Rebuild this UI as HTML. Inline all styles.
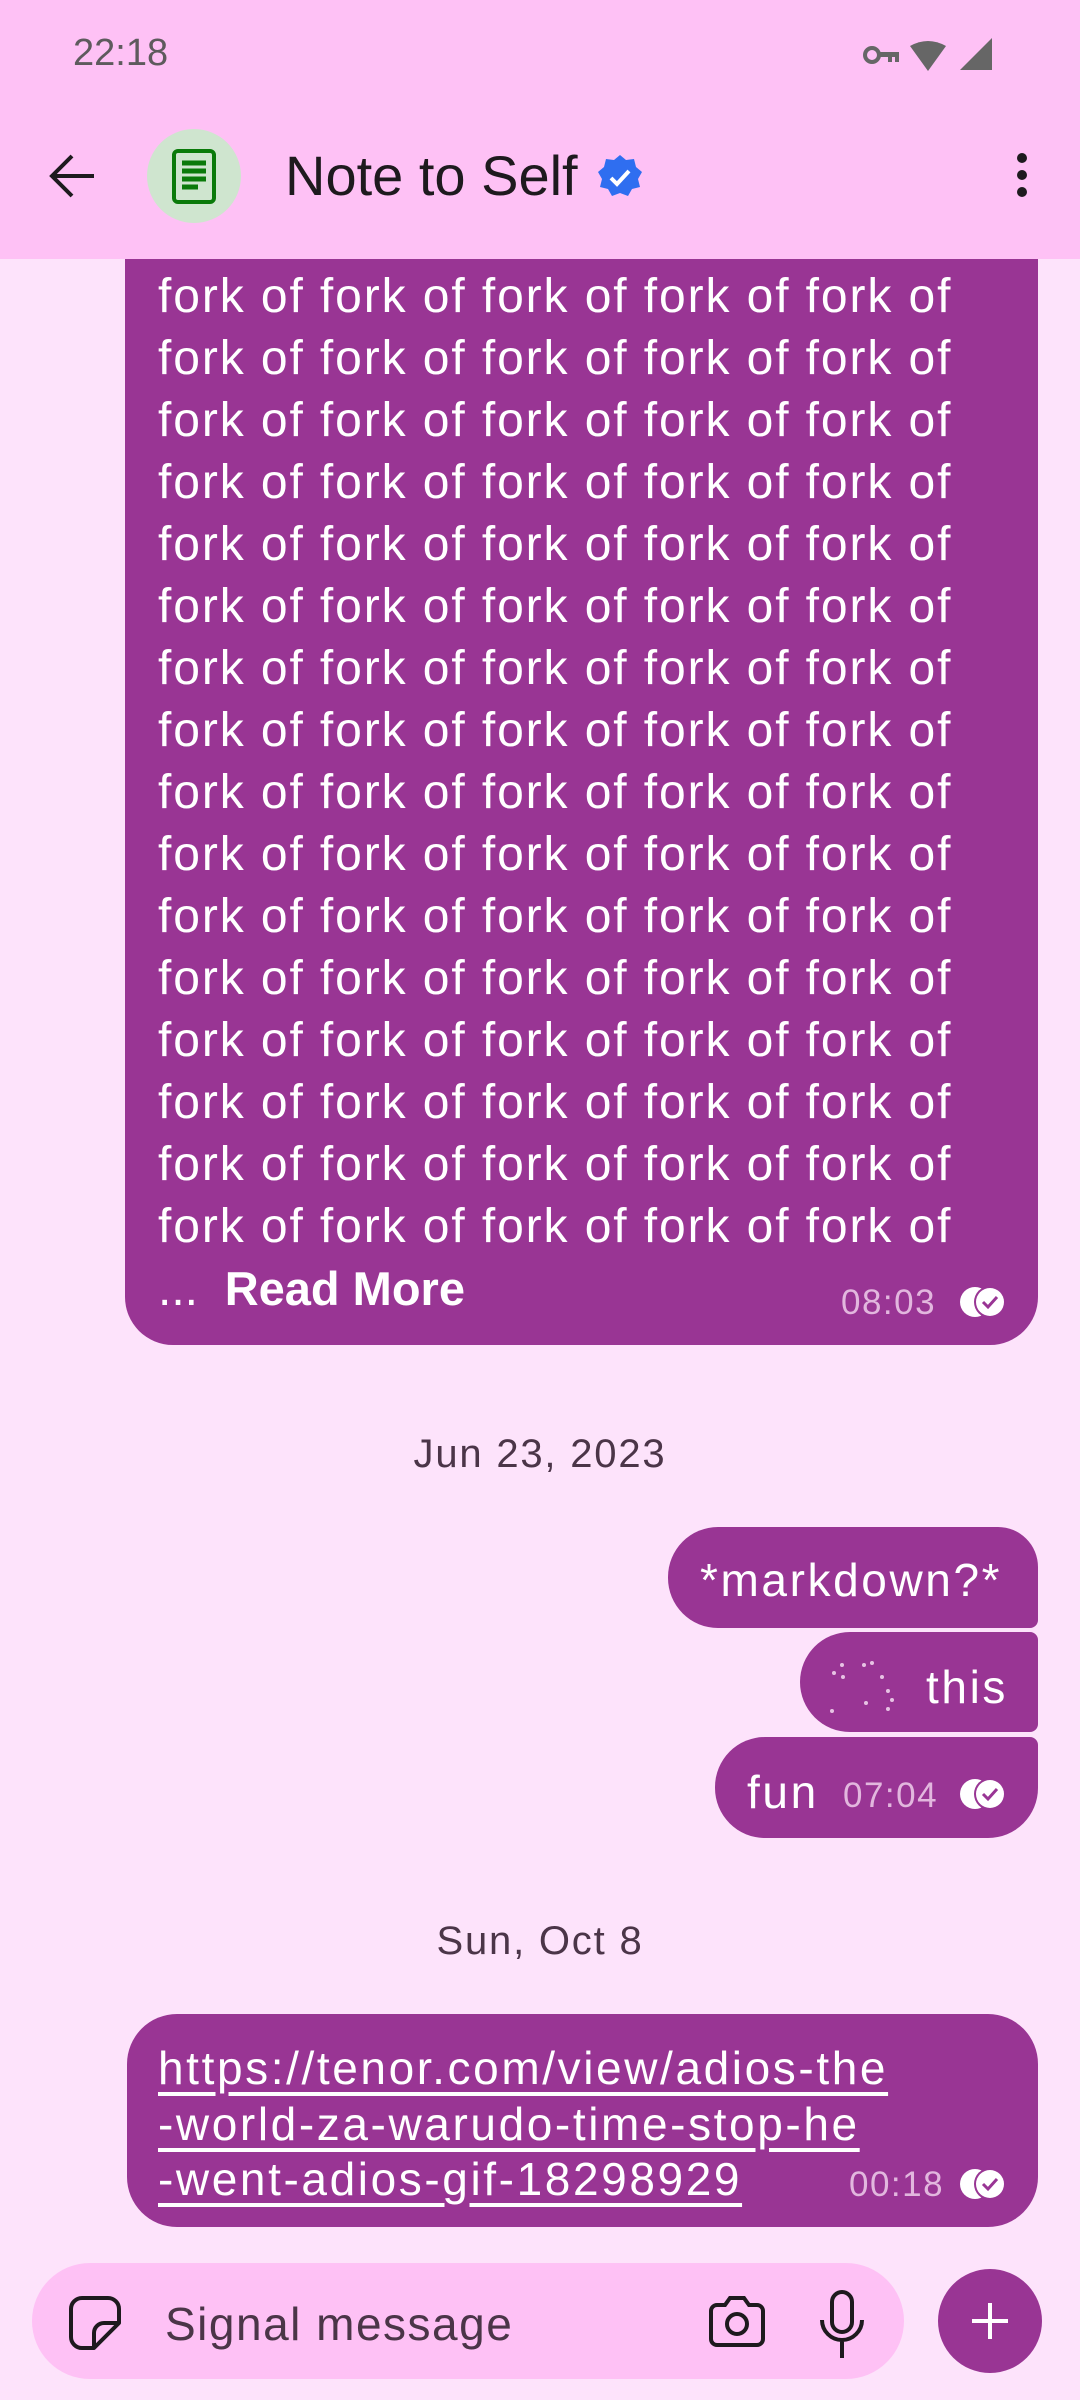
<!DOCTYPE html>
<html><head><meta charset="utf-8"><style>
*{margin:0;padding:0;box-sizing:border-box}
body{width:1080px;height:2400px;background:#fde3fb;position:relative;overflow:hidden;font-family:"Liberation Sans",sans-serif;color:#fff}
.abs{position:absolute}
.hdr{position:absolute;left:0;top:0;width:1080px;height:259px;background:#fec1f5;z-index:5}
.bub{position:absolute;background:#993594}
.fl{position:absolute;left:158px;font-size:48px;letter-spacing:1.9px;line-height:62px;white-space:nowrap}
.ts{position:absolute;font-size:35px;letter-spacing:1.5px;color:#e2b7de;white-space:nowrap}
.t46{position:absolute;font-size:46px;letter-spacing:2.6px;white-space:nowrap}
</style></head><body>
<div class="hdr">
  <div class="abs" style="left:73px;top:32px;font-size:38px;color:#5e5a5d">22:18</div>
  <svg class="abs" style="left:862px;top:38px" width="132" height="34" viewBox="0 0 132 34">
    <circle cx="10" cy="17" r="7" fill="none" stroke="#666" stroke-width="4"/>
    <path d="M17 14h20v10h-4v-5h-3v5h-4v-5h-9z" fill="#666"/>
    <path d="M48 8 Q66 -2 84 8 L66 33 Z" fill="#666"/>
    <path d="M130 0 L130 32 L98 32 Z" fill="#666"/>
  </svg>
  <svg class="abs" style="left:48px;top:153px" width="48" height="46" viewBox="0 0 48 46"><path d="M46 23H4M24 3L4 23l20 20" fill="none" stroke="#1e1a1e" stroke-width="4"/></svg>
  <div class="abs" style="left:147px;top:129px;width:94px;height:94px;border-radius:50%;background:#cfe5cf"></div>
  <svg class="abs" style="left:172px;top:149px" width="44" height="55" viewBox="0 0 44 55">
    <rect x="2" y="2" width="40" height="51" rx="4" fill="none" stroke="#0a7a0a" stroke-width="4"/>
    <path d="M10 14h24M10 22h24M10 30h24M10 38h16" stroke="#0a7a0a" stroke-width="5"/>
  </svg>
  <div class="abs" style="left:285px;top:143px;font-size:56px;color:#1e1a1e">Note to Self</div>
  <svg class="abs" style="left:596px;top:153px" width="48" height="48" viewBox="0 0 48 48">
    <path d="M24 2l6 5 8-1 2 8 6 5-4 7 2 8-8 2-4 7-8-3-8 3-4-7-8-2 2-8-4-7 6-5 2-8 8 1z" fill="#2f6ef0"/>
    <path d="M15 25l6 6 12-13" fill="none" stroke="#fff" stroke-width="4"/>
  </svg>
  <div class="abs" style="left:1017px;top:153px;width:10px;height:10px;border-radius:50%;background:#1e1a1e"></div>
  <div class="abs" style="left:1017px;top:170px;width:10px;height:10px;border-radius:50%;background:#1e1a1e"></div>
  <div class="abs" style="left:1017px;top:187px;width:10px;height:10px;border-radius:50%;background:#1e1a1e"></div>
</div>

<div class="bub" style="left:125px;top:180px;width:913px;height:1165px;border-radius:0 0 48px 48px"></div>
<div class="fl" style="top:266px">fork of fork of fork of fork of fork of</div>
<div class="fl" style="top:328px">fork of fork of fork of fork of fork of</div>
<div class="fl" style="top:390px">fork of fork of fork of fork of fork of</div>
<div class="fl" style="top:452px">fork of fork of fork of fork of fork of</div>
<div class="fl" style="top:514px">fork of fork of fork of fork of fork of</div>
<div class="fl" style="top:576px">fork of fork of fork of fork of fork of</div>
<div class="fl" style="top:638px">fork of fork of fork of fork of fork of</div>
<div class="fl" style="top:700px">fork of fork of fork of fork of fork of</div>
<div class="fl" style="top:762px">fork of fork of fork of fork of fork of</div>
<div class="fl" style="top:824px">fork of fork of fork of fork of fork of</div>
<div class="fl" style="top:886px">fork of fork of fork of fork of fork of</div>
<div class="fl" style="top:948px">fork of fork of fork of fork of fork of</div>
<div class="fl" style="top:1010px">fork of fork of fork of fork of fork of</div>
<div class="fl" style="top:1072px">fork of fork of fork of fork of fork of</div>
<div class="fl" style="top:1134px">fork of fork of fork of fork of fork of</div>
<div class="fl" style="top:1196px">fork of fork of fork of fork of fork of</div>
<div class="fl" style="top:1258px;letter-spacing:0">...&nbsp;&nbsp;<b style="font-size:47px;letter-spacing:0">Read More</b></div>
<div class="ts" style="left:841px;top:1283px">08:03</div>
<svg class="abs" style="left:958px;top:1284px" width="50" height="36" viewBox="0 0 50 36"><circle cx="17" cy="18" r="15" fill="#fff"/><circle cx="32" cy="18" r="16" fill="#993594"/><circle cx="32" cy="18" r="14" fill="#fff"/><path d="M25 18l5 5 9-10" fill="none" stroke="#993594" stroke-width="3"/></svg>

<div class="abs" style="left:0;width:1080px;top:1432px;text-align:center;font-size:40px;letter-spacing:1.8px;color:#4b3548">Jun 23, 2023</div>

<div class="bub" style="left:668px;top:1527px;width:370px;height:101px;border-radius:50px 40px 8px 50px"></div>
<div class="t46" style="left:700px;top:1553px">*markdown?*</div>
<div class="bub" style="left:800px;top:1632px;width:238px;height:100px;border-radius:50px 8px 8px 50px"></div>
<div class="t46" style="left:926px;top:1660px">this</div>
<svg class="abs" style="left:830px;top:1655px" width="80" height="60"><g fill="#e7c3e4"><circle cx="4" cy="18" r="2"/><circle cx="12" cy="10" r="2"/><circle cx="13" cy="22" r="2"/><circle cx="34" cy="10" r="2"/><circle cx="42" cy="8" r="2"/><circle cx="52" cy="22" r="2"/><circle cx="58" cy="36" r="2"/><circle cx="62" cy="45" r="2"/><circle cx="36" cy="48" r="2"/><circle cx="58" cy="54" r="2"/><circle cx="2" cy="56" r="2"/></g></svg>
<div class="bub" style="left:715px;top:1737px;width:323px;height:101px;border-radius:50px 8px 50px 50px"></div>
<div class="t46" style="left:747px;top:1765px">fun</div>
<div class="ts" style="left:843px;top:1776px">07:04</div>
<svg class="abs" style="left:958px;top:1776px" width="50" height="36" viewBox="0 0 50 36"><circle cx="17" cy="18" r="15" fill="#fff"/><circle cx="32" cy="18" r="16" fill="#993594"/><circle cx="32" cy="18" r="14" fill="#fff"/><path d="M25 18l5 5 9-10" fill="none" stroke="#993594" stroke-width="3"/></svg>

<div class="abs" style="left:0;width:1080px;top:1919px;text-align:center;font-size:40px;letter-spacing:1.8px;color:#4b3548">Sun, Oct 8</div>

<div class="bub" style="left:127px;top:2014px;width:911px;height:213px;border-radius:50px"></div>
<div class="t46" style="left:158px;top:2041px;text-decoration:underline;text-underline-offset:8px">https://tenor.com/view/adios-the</div>
<div class="t46" style="left:158px;top:2097px;text-decoration:underline;text-underline-offset:8px">-world-za-warudo-time-stop-he</div>
<div class="t46" style="left:158px;top:2152px;text-decoration:underline;text-underline-offset:8px">-went-adios-gif-18298929</div>
<div class="ts" style="left:849px;top:2165px">00:18</div>
<svg class="abs" style="left:958px;top:2166px" width="50" height="36" viewBox="0 0 50 36"><circle cx="17" cy="18" r="15" fill="#fff"/><circle cx="32" cy="18" r="16" fill="#993594"/><circle cx="32" cy="18" r="14" fill="#fff"/><path d="M25 18l5 5 9-10" fill="none" stroke="#993594" stroke-width="3"/></svg>

<div class="abs" style="left:32px;top:2263px;width:872px;height:116px;border-radius:58px;background:#fec1f5"></div>
<svg class="abs" style="left:68px;top:2295px" width="54" height="56" viewBox="0 0 54 56"><path d="M14 3h26a11 11 0 0 1 11 11v14L26 53H14A11 11 0 0 1 3 42V14A11 11 0 0 1 14 3z M51 28H36a10 10 0 0 0-10 10v15" fill="none" stroke="#1e1a1e" stroke-width="4" stroke-linejoin="round"/></svg>
<div class="abs" style="left:165px;top:2297px;font-size:46px;letter-spacing:1.5px;color:#4b3548">Signal message</div>
<svg class="abs" style="left:707px;top:2295px" width="60" height="54" viewBox="0 0 60 54"><path d="M4 16a6 6 0 0 1 6-6h8l5-7h14l5 7h8a6 6 0 0 1 6 6v28a6 6 0 0 1-6 6H10a6 6 0 0 1-6-6z" fill="none" stroke="#1e1a1e" stroke-width="4"/><circle cx="30" cy="29" r="10" fill="none" stroke="#1e1a1e" stroke-width="4"/></svg>
<svg class="abs" style="left:818px;top:2290px" width="48" height="70" viewBox="0 0 48 70"><rect x="14" y="2" width="20" height="40" rx="10" fill="none" stroke="#1e1a1e" stroke-width="4"/><path d="M4 30a20 20 0 0 0 40 0M24 50v18" fill="none" stroke="#1e1a1e" stroke-width="4"/></svg>
<div class="abs" style="left:938px;top:2269px;width:104px;height:104px;border-radius:50%;background:#993594"></div>
<svg class="abs" style="left:970px;top:2301px" width="40" height="40"><path d="M20 2v36M2 20h36" stroke="#fff" stroke-width="4"/></svg>
</body></html>
